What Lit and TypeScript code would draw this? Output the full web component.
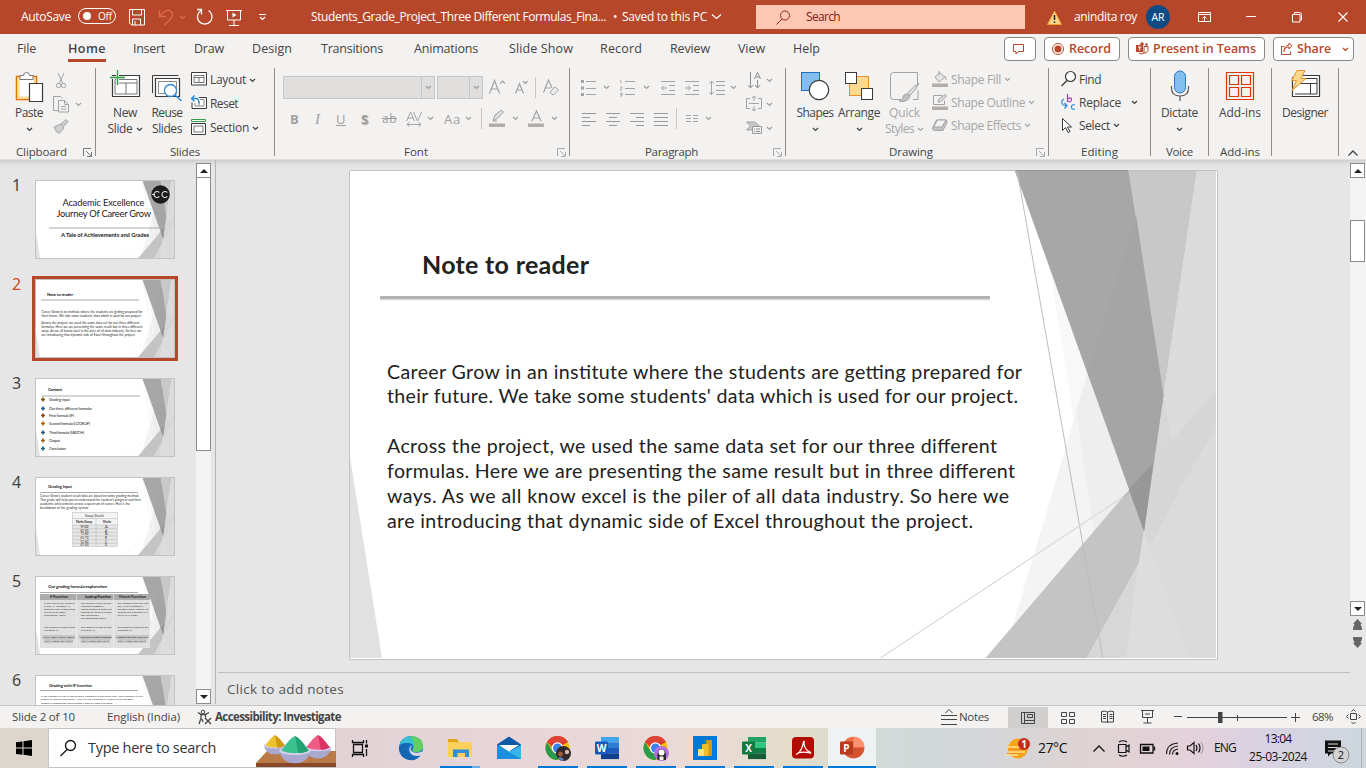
import { LitElement, html, svg, css } from "lit";
import { customElement } from "lit/decorators.js";

/* Label whose tracking is tuned so that it occupies w pixels. */
const t = (text: string, w: number, cls = "") =>
  html`<span class="t ${cls}" data-w=${w}>${text}</span>`;

/* Inline icon; the drawing uses window coordinates starting at (x, y). */
const ic = (x: number, y: number, w: number, h: number, body: unknown, cls = "") =>
  html`<svg class="ic ${cls}" width=${w} height=${h} viewBox="${x} ${y} ${w} ${h}">${body}</svg>`;

const chev = (cls = "") => ic(0, 0, 7, 5, svg`<path d="M1 1l2.5 2.4L6 1" fill="none" stroke="currentColor" stroke-width="1.3"/>`, cls);

const launcher = (cls = "") =>
  ic(0, 0, 9, 9, svg`<path d="M.5 8V.5H8M3 3l5 5M8.5 4v4.5H4" fill="none" stroke="currentColor"/>`, "launch " + cls);

/* Facet background shared by the main slide and the thumbnails. */
const facets = svg`
  <rect x="350" y="170" width="868" height="489" fill="#fff"/>
  <path d="M350 457L382 658H350z" fill="#e1e1e1"/>
  <path d="M1034 170L1112 658H1216V170z" fill="#f8f8f8"/>
  <path d="M1136 215L1088 372 1065 450 1003 658H1216V215z" fill="#f4f4f4"/>
  <path d="M1088 372L1076 411 1113 658H1216V372z" fill="#eeeeee"/>
  <path d="M1197 170H1216V658H1126L1144 531 1163.5 395z" fill="#dbdbdb"/>
  <path d="M1163.5 395L1179.5 490 1150 545 1144 531z" fill="#d5d5d5"/>
  <path d="M1153 463L1216 390V427L1179 490 1150 545 1144 531z" fill="#d6d6d6"/>
  <path d="M1163.5 395L1171 440 1153 463z" fill="#d7d7d7"/>
  <path d="M985.5 658L1129 490 1153 463 1144 531 1139 563 1087 658z" fill="#c4c4c4"/>
  <path d="M1087 658L1139 563 1126 658z" fill="#d7d7d7"/>
  <path d="M1139 563L1144 531 1189 658H1126z" fill="#dddddd"/>
  <path d="M1128.5 170H1197L1163.5 395z" fill="#c8c8c8"/>
  <path d="M1014.5 170H1128.5L1163.5 395 1144 531z" fill="#a7a7a7"/>
  <path d="M1136 215L1163.5 395 1144 531 1088 372z" fill="#a5a5a5"/>
  <path d="M1129 490L1153 463 1144 531z" fill="#979797"/>
  <path d="M1017 170L1103 659" stroke="#bdbdbd" fill="none"/>
  <path d="M879 659L1123 497" stroke="#dadada" fill="none" stroke-width="1.2"/>
  <path d="M1123 497L1150 478" stroke="#9d9d9d" stroke-width=".6"/>`;

const st = (x: number, y: number, s: number, len: number, text: string, cls = "") =>
  svg`<text class="st ${cls}" x=${x} y=${y} font-size=${s} textLength=${len}>${text}</text>`;

const slide = (w: number, h: number, body: unknown) => html`<svg class="thumb" width=${w} height=${h} viewBox="0 0 ${w} ${h}">
  <svg x="0" y="0" width=${w} height=${h} viewBox="350 170 868 489" preserveAspectRatio="none">${facets}</svg>
  ${body}<rect x=".5" y=".5" width=${w - 1} height=${h - 1} fill="none" stroke="#c3c3c3"/></svg>`;

const rule = (x: number, y: number, w: number) => svg`<path d="M${x} ${y}h${w}" stroke="#aaa"/>`;

const thumbs = [
  svg`${st(27.5, 26, 9.3, 82, "Academic Excellence")}${st(21.5, 37, 9.3, 94.5, "Journey Of Career Grow")}
    ${rule(14, 48, 110)}${st(26, 57, 5.8, 88, "A Tale of Achievements and Grades", "sb")}
    <circle cx="125.5" cy="14.5" r="9.3" fill="#1d1d1f"/><g fill="none" stroke="#ddd" stroke-width="1.1"><path d="M124.3 12.600a3 3 0 1 0 0 3.800M132.300 12.600a3 3 0 1 0 0 3.800M117 14.500h3"/></g>`,
  svg`${st(12, 17, 4.3, 26, "Note to reader", "sb")}${rule(6, 21, 98)}
    ${st(6.5, 34.2, 3.2, 101, "Career Grow in an institute where the students are getting prepared for")}
    ${st(6.5, 38, 3.2, 100, "their future. We take some students' data which is used for our project.")}
    ${st(6.5, 45.4, 3.2, 98, "Across the project, we used the same data set for our three different")}
    ${st(6.5, 49.2, 3.2, 101, "formulas. Here we are presenting the same result but in three different")}
    ${st(6.5, 53, 3.2, 100, "ways. As we all know excel is the piler of all data industry. So here we")}
    ${st(6.5, 56.8, 3.2, 94, "are introducing that dynamic side of Excel throughout the project.")}`,
  svg`${st(13, 13.2, 4.3, 14, "Content", "sb")}${rule(7, 18, 98)}
    ${[
      ["Grading input", 22, 21], ["Our three different formulas", 31, 43], ["First formula (IF)", 38, 25], ["Second formula (LOOKUP)", 46, 41],
      ["Third formula (MATCH)", 55, 35], ["Output", 63, 11], ["Conclusion", 71, 17],
    ].map(([s, y, w], i) => svg`<path d="M8 ${(y as number) - 2.5}v4M6 ${(y as number) - 0.5}h4" stroke=${["#7a5a10", "#2d5f8c", "#8c4020", "#b06a10", "#2f5b7a", "#a06a10", "#1f6c80"][i]} stroke-width="1.700"/>${st(14, (y as number) + 1, 3.9, w as number, s as string)}`)}`,
  svg`${st(13, 11, 4.2, 24, "Grading Input", "sb")}${rule(5, 15.5, 98)}
    ${st(5, 20.3, 3.1, 99, "Career Grow's student result data are based on some grading method.")}
    ${st(5, 24.3, 3.1, 101, "This grade will help you to understand the student's progress and their")}
    ${st(5, 28.3, 3.1, 90, "academic achievements across a spectrum of scores. Here's the")}
    ${st(5, 32.3, 3.1, 49, "breakdown of the grading system.")}
    <rect x="37.500" y="35.500" width="45" height="34" fill="#e6e6e6" stroke="#ccc" stroke-width=".7"/>
    <rect x="38" y="36" width="44" height="12" fill="#f4f4f4"/>
    <path d="M37.500 41.500h45M37.500 48h45M61 41.500v28M38 51.700h44M38 55.300h44M38 59h44M38 62.700h44M38 66.300h44" stroke="#bbb" stroke-width=".6"/>
    ${st(50, 40.3, 2.8, 19, "Group Details")}${st(41, 45.7, 2.8, 16, "Marks Group", "sb")}${st(68, 45.7, 2.8, 8, "Marks", "sb")}
    ${[["91-100", "A+"], ["81-90", "A"], ["71-80", "B+"], ["61-70", "B"], ["51-60", "C"], ["41-50", "D"]].map(([a, b], i) =>
      svg`${st(45.5, 51.2 + i * 3.6, 2.9, 8, a)}${st(70, 51.2 + i * 3.6, 2.9, 3.5, b)}`)}`,
  svg`${st(13, 12, 4.5, 59, "Our grading formula explanation", "sb")}${rule(5, 16.5, 98)}
    <rect x="5" y="18" width="110" height="54" fill="#e0e0e0"/><rect x="5" y="18" width="110" height="6" fill="#ababab"/>
    <path d="M41.500 18v54M78.500 18v54" stroke="#eee" stroke-width=".6"/>
    ${[["If Function", 15], ["Look-up Function", 50], ["Match Function", 84]].map(([s, x], i) => st(x as number, 21.9, 4, [18, 26, 27][i], s as string, "sb"))}
    ${["If the use of our formula|is the IF function, a|powerful tool in Excel that|allows us to apply|conditional logic.||||The formula is used for the|function is:", "Our formula relies on the|VLOOKUP function, a|robust feature in Excel for|looking up values in a table|and returning a|corresponding result.|||The formula is used for the|function is:", "Our formula kicks off with|the MATCH function, a|versatile Excel feature for|finding the position of a|value in a range.||||The formula is used for the|function is:"].map((c, i) =>
      c.split("|").map((s, j) => s ? st(9 + i * 36.7, 27.5 + j * 3.05, 2.5, Math.min(31, s.length * 1.22), s) : ""))}
    ${["=IF(H2>=90%,\"A+\",IF(H2>=80%,\"A\",", "=VLOOKUP(H2,$L$2:$N$10,3,TRUE)", "=INDEX($M$2:$M$10,MATCH(H2,1))"].map((s, i) =>
      svg`<path d="M${7 + i * 36.7} 59h33v4h-33zM${9 + i * 36.7} 63h29v4h-29z" fill="#c6c6c6"/>${st(7.5 + i * 36.7, 62, 2.5, 32, s)}${st(9.5 + i * 36.7, 66, 2.5, 28, "H2>=70%,\"B\",\"C\"))")}`)}`,
  svg`${st(14, 12, 4.3, 43, "Grading with IF function", "sb")}${rule(5, 15.500, 98)}
    ${st(6, 22.2, 2.6, 102, "If the function is one of the primary functions in the Excel tool. This function is very")}
    ${st(6, 25.4, 2.6, 92, "simple to explain and useful. Here we are using the IF formula with multiple")}
    ${st(6, 28.6, 2.6, 72, "nested IF statements and creating a step-by-step evolution.")}`,
];

const big = (icon: unknown, a: [string, number], b?: [string, number] | null, drop = false, cls = "") => html`<div class="big ${cls}">${icon}
  <div class="bl">${t(a[0], a[1])}</div><div class="bl">${b ? t(b[0], b[1]) : ""}${drop ? chev() : ""}</div></div>`;

const chromeLogo = (cx: number, badge: unknown) => ic(cx - 13, 734, 26, 28, svg`<g transform="translate(${cx - 13} 734)">
  <circle cx="12.500" cy="14" r="12" fill="#fbbc04"/><path d="M12.500 14L2.100 8A12 12 0 0 1 22.900 8z" fill="#d93a2f"/><path d="M2.100 8A12 12 0 0 0 12.500 26L18 16.500 12.500 14 7.500 17z" fill="#2a9a4b"/>
  <path d="M2.100 8A12 12 0 0 1 22.900 8H12.500L8 14z" fill="#dd4234"/><circle cx="12.500" cy="14" r="5.800" fill="#fff"/><circle cx="12.500" cy="14" r="4.500" fill="#3d82ea"/>${badge}</g>`);

const officeLogo = (x: number, letter: string, dark: string, cols: string[]) => ic(x, 736, 25, 24, svg`
  ${cols.map((c, i) => svg`<rect x=${x + 6} y=${737 + i * 5.5} width="18" height="5.600" fill=${c}/>`)}
  <rect x=${x} y="741.500" width="13" height="13" rx="1" fill=${dark}/><text x=${x + 6.5} y="751.700" class="logo">${letter}</text>`);

const app = (icon: unknown, cls = "run") => html`<div class="app ${cls}">${icon}</div>`;

@customElement("app-root")
class AppRoot extends LitElement {
  static styles = css`
    :host { display: block; width: 1366px; height: 768px; overflow: hidden; font: 12px/16px "Open Sans", "Noto Sans", sans-serif; color: #444; background: #e6e6e6; }
    * { box-sizing: border-box; }
    .t { white-space: pre; display: inline-block; flex: none; }
    .ic, .thumb { display: block; flex: none; overflow: visible; }
    .w { height: 768px; display: grid; grid-template-rows: 34px 34px 92px 546px 22px 40px; }
    .title { background: #b7472a; color: #fff; display: grid; align-items: center; justify-items: start; padding-left: 21px;
      grid-template-columns: 57px 51px 30px 20px 17px 30px 32px 53px 302px 9px 89px 45px 291px 27px 72px 52px 48px 46px 46px 28px; }
    .toggle { width: 38px; height: 16px; border: 1px solid #fff; border-radius: 8px; display: flex; align-items: center; gap: 7px; padding-left: 4px; font-size: 10px; line-height: 13px; margin-top: -2px; }
    .knob { width: 8px; height: 8px; border-radius: 50%; background: #fff; }
    .find { width: 269px; height: 24px; background: #fdc7b4; color: #7b1c19; display: flex; align-items: center; gap: 16px; padding-left: 20px; }
    .dim { color: #e2694b; }
    .avatar { width: 24px; height: 24px; border-radius: 50%; background: #0f4c85; font-size: 10.5px; display: flex; align-items: center; justify-content: center; }
    .tabs { background: #f3f2f1; font-size: 12.500px; display: grid; align-items: start; justify-items: start; padding-left: 17px;
      grid-template-columns: 51px 65px 61px 58px 69px 93px 95px 91px 70px 68px 55px 211px 40px 84px 145px 81px; }
    .tab { height: 28px; padding-top: 7px; display: flex; line-height: 16px; }
    .on { border-bottom: 3px solid #b7472a; font-weight: 600; color: #444; }
    .btn { height: 24px; margin-top: 3px; border: 1px solid #8a8886; border-radius: 4px; background: #fff; color: #b7472a; font-weight: 600; display: flex; align-items: center; gap: 5px; padding: 0 7px; }
    .b0 { width: 32px; padding-left: 8px; } .b1 { width: 76px; } .b2 { width: 137px; } .b3 { width: 81px; } .b3 .t { margin-right: 6px; }
    .ribbon { background: #f3f2f1; border-bottom: 1px solid #e1dfdd; display: grid; grid-template-columns: 96px 179px 295px 216px 263px 102px 58px 63px 67px 27px; }
    .g { height: 88px; border-right: 1px solid #8f8d8b; display: grid; grid-template-rows: 76px 12px; }
    .body { display: flex; }
    .foot { display: flex; font-size: 11.500px; line-height: 16px; color: #444; }
    .name { flex: 1; display: flex; justify-content: center; }
    .launch { margin: 4px 3px 0 0; color: #777; } .off { color: #aaa; }
    .big { display: flex; flex-direction: column; align-items: center; }
    .big > .ic { margin-bottom: 1px; }
    .bl { height: 16px; display: flex; align-items: center; gap: 3px; }
    .gray { color: #a6a6a6; }
    .c0 { width: 53px; padding-left: 5px; } .c1 { width: 51px; padding-left: 7px; } .c2 { width: 44px; padding-right: 4px; }
    .d0 { width: 50px; padding-left: 8px; } .d1 { width: 46px; } .d2 { width: 50px; padding-right: 5px; } .full { flex: 1; }
    .list { display: grid; grid-template-rows: 24px 24px 24px; align-content: start; }
    .even { grid-template-rows: 23px 23px 23px; }
    .li { display: flex; align-items: center; gap: 3px; }
    .clip { grid-template-columns: 22px 15px; align-items: center; justify-items: start; }
    .edit { padding-left: 12px; } .wide { gap: 10px; } .li .pair { display: flex; gap: 3px; align-items: center; }
    .fontg { padding: 8px 0 0 8px; display: grid; grid-template-rows: 23px 23px; row-gap: 8px; color: #a0a0a0; }
    .f1 { display: grid; align-items: center; justify-items: start; grid-template-columns: 154px 52px 26px 20px 8px 18px; }
    .f2 { display: grid; align-items: center; justify-items: start; padding-left: 7px; grid-template-columns: 25px 21px 25px 21px 24px 21px 17px 21px 16px 8px 23px 16px 23px 8px; font-size: 13px; }
    .combo { height: 23px; width: 152px; border: 1px solid #c6c6c6; background: #e1dfdd; display: flex; align-items: center; justify-content: flex-end; }
    .combo .cc { height: 21px; width: 13px; border-left: 1px solid #c6c6c6; display: flex; align-items: center; justify-content: center; }
    .small { width: 46px; } .div { width: 1px; height: 21px; background: #c8c6c4; }
    .b { font-weight: 700; } .i { font-style: italic; font-family: "Liberation Serif", serif; font-size: 15px; } .u { text-decoration: underline; } .s { text-decoration: line-through; font-size: 12px; } .sh { text-shadow: 1px 1px 1px #aaa; }
    .parag { display: grid; grid-template-columns: 176px 30px; color: #a0a0a0; }
    .pl { display: grid; grid-template-rows: 23px 23px; row-gap: 8px; padding: 8px 0 0 11px; }
    .p1 { display: grid; align-items: center; justify-items: start; grid-template-columns: 22px 16px 24px 18px 24px 24px 21px 8px; }
    .p2 { display: grid; align-items: center; justify-items: start; padding-left: 1px; grid-template-columns: 24px 24px 24px 22px 10px 19px 8px; }
    .collapse { padding: 82px 0 0 9px; color: #444; }
    .work { display: grid; grid-template-columns: 196px 15px 5px 1134px 16px; background: linear-gradient(#cfcfcf, #e6e6e6 6px) no-repeat; background-size: 100% 6px; border-bottom: 1px solid #c6c4c2; overflow: hidden; }
    .panel { padding: 20px 0 0 12px; overflow: hidden; height: 545px; }
    .item { display: grid; grid-template-columns: 23px 140px; height: 99px; font-size: 16px; line-height: 20px; }
    .num { margin-top: -5px; } .item .num { font-family: "Noto Sans", sans-serif; }
    .sel { color: #d24726; } .sel .thumb { outline: 3px solid #b7472a; }
    .st { font-family: Lato, "Noto Sans", sans-serif; fill: #222; } .sb { font-weight: 700; }
    .bar { margin-top: 3px; height: 541px; background: #f3f3f3; display: flex; flex-direction: column; }
    .sq { width: 15px; height: 15px; border: 1px solid #8c8c8c; background: #fff; display: flex; align-items: center; justify-content: center; }
    .track { flex: 1; } .hold { width: 15px; background: #fff; border: 1px solid #8c8c8c; } .h1 { height: 274px; margin-top: -1px; } .h2 { height: 42px; margin-top: 42px; }
    .split { border-right: 1px solid #b4b4b4; height: 544px; margin-right: 0; }
    .stage { display: grid; grid-template-rows: 512px 1fr; }
    .canvas { padding: 10px 0 0 133px; }
    .notes { border-top: 1px solid #c0c0c0; margin-left: 2px; padding: 7px 0 0 9px; font-size: 13.500px; line-height: 18px; color: #555; }
    .rbar { height: 453px; } .right { color: #666; } .jump { margin: 3px 0 0 3px; }
    .status { background: #f3f2f1; display: grid; align-items: center; justify-items: start; padding-left: 12px; font-size: 11.500px; color: #444;
      grid-template-columns: 95px 90px 18px 726px 18px 49px 40px 13px 40px 40px 33px 13px 104px 21px 34px 16px; }
    .active { width: 40px; height: 21px; background: #d0cfce; display: flex; align-items: center; justify-content: center; }
    .task { background: linear-gradient(90deg, #dcd6cd 0, #ddd5cf 12%, #e2d3d6 27%, #e8d5d9 38%, #eadbd6 52%, #e3ddc9 58%, #d0dad8 65%, #d5d5d7 73%, #dfd3d3 80%, #e4d1da 87%, #d8d2e2 93%, #cdd7dd); color: #111; display: grid;
      grid-template-columns: 48px 288px 51px 441px 178px 32px 55px 25px 22px 26px 21px 27px 35px 76px 1fr; align-items: center; justify-items: start; }
    .start { justify-self: center; }
    .box { width: 288px; height: 40px; background: #fff; border: 1px solid #c4c2c4; display: flex; align-items: center; padding-left: 11px; gap: 12px; font-size: 14.500px; color: #333; }
    .bowls { margin-left: auto; margin-right: -1px; }
    .view { margin-left: 16px; }
    .apps { display: flex; gap: 1px; } .app { width: 48px; height: 40px; display: flex; align-items: center; justify-content: center; position: relative; }
    .run::after { content: ""; position: absolute; left: 4px; right: 4px; bottom: 0; height: 2px; background: #0078d7; }
    .ex::after { right: 12px; box-shadow: 8px 0 #6aaee8; } .cur { background: #eef2f3; } .cur::after { left: 0; right: 0; }
    .wx { font-size: 14px; } .clock { display: flex; flex-direction: column; align-items: center; line-height: 18px; width: 58px; }
    .logo { font: 700 10px "Open Sans", sans-serif; fill: #fff; text-anchor: middle; }
  `;

  updated() {
    this.renderRoot.querySelectorAll<HTMLElement>("[data-w]").forEach((el) => {
      el.style.letterSpacing = "0";
      const n = el.getBoundingClientRect().width;
      el.style.letterSpacing = `${(Number(el.dataset.w) - n) / (el.textContent || " ").length}px`;
    });
  }

  titleBar() {
    return html`<header class="title">
      ${t("AutoSave", 50)}
      <div class="toggle"><span class="knob"></span>${t("Off", 14)}</div>
      ${ic(129, 9, 16, 17, svg`<path d="M129.500 9.500h15v15.500h-13l-2-2zM132.500 9.500v5.500h9v-5.500M132.500 25v-6h8v6M135 21v4" fill="none" stroke="#fff"/>`)}
      ${ic(159, 9, 15, 17, svg`<path d="M159.500 10v6.500h6.500M160 16l4-4c6-4.500 12 2 6.500 7l-6 6" fill="none" stroke="#e2694b" stroke-width="1.300"/>`)}
      ${chev("dim")}
      ${ic(196, 9, 17, 18, svg`<path d="M201 11.500a7.300 7.300 0 1 0 7.500 0M197 10.500h4.500v5" fill="none" stroke="#fff" stroke-width="1.300"/>`)}
      ${ic(226, 9, 16, 17, svg`<path d="M226 10.500h16M227.500 10.500v9.500h13v-9.500M234 20v5M229 25.500h10" fill="none" stroke="#fff"/><path d="M232.500 12.500l4 2.500-4 2.500z" fill="#fff"/>`)}
      ${ic(258, 13, 9, 8, svg`<path d="M259 14.500h7M260 17l2.500 2.500 2.500-2.500" fill="none" stroke="#fff" stroke-width="1.200"/>`)}
      ${t("Students_Grade_Project_Three Different Formulas_Fina...", 295)}
      ${t("•", 5)}
      ${t("Saved to this PC", 85)}
      ${ic(711, 13, 11, 8, svg`<path d="M712 14.500l4.500 4 4.500-4" fill="none" stroke="#fff" stroke-width="1.200"/>`)}
      <div class="find">${ic(776, 9, 14, 15, svg`<circle cx="785" cy="14.500" r="4.500" fill="none" stroke="#8b2a23"/><path d="M782 18l-5.500 5.500" stroke="#8b2a23"/>`)}${t("Search", 34)}</div>
      ${ic(1047, 9, 15, 15, svg`<path d="M1054.500 10l7 13.500h-14z" fill="#fbd58a" stroke="#f0a030"/><path d="M1054.500 14v5M1054.500 20.500v1.500" stroke="#222" stroke-width="1.500"/>`)}
      ${t("anindita roy", 63)}
      <div class="avatar">${t("AR", 13)}</div>
      ${ic(1198, 10, 13, 12, svg`<path d="M1198.500 11.500h12v9h-12zM1198.500 13.500h12M1204.500 20v-4.500M1202.500 17.500l2-2 2 2" fill="none" stroke="#fff"/>`)}
      ${ic(1246, 10, 10, 12, svg`<path d="M1246 15.500h10" stroke="#fff"/>`)}
      ${ic(1292, 11, 10, 11, svg`<path d="M1292.500 13.500h7.500v7.500h-7.500zM1294.500 13v-1.500h5q2 0 2 2v5.500h-1.500" fill="none" stroke="#fff"/>`)}
      ${ic(1338, 11, 10, 10, svg`<path d="M1338.500 11.500l9 9M1347.500 11.500l-9 9" stroke="#fff" stroke-width="1.100"/>`)}
    </header>`;
  }

  tabRow() {
    const tabs: [string, number][] = [["File", 19], ["Home", 38], ["Insert", 32], ["Draw", 30], ["Design", 40], ["Transitions", 62], ["Animations", 64], ["Slide Show", 64], ["Record", 42], ["Review", 40], ["View", 27], ["Help", 27]];
    return html`<nav class="tabs">
      ${tabs.map(([s, w]) => html`<div class="tab ${s === "Home" ? "on" : ""}">${t(s, w)}</div>`)}
      <div class="btn b0">${ic(1013, 43, 11, 11, svg`<path d="M1013.500 43.500h10v7h-5l-2.500 2.500v-2.500h-2.500z" fill="none" stroke="#b7472a"/>`)}</div>
      <div class="btn b1">${ic(1052, 43, 12, 12, svg`<circle cx="1058" cy="49" r="5.500" fill="none" stroke="#b7472a"/><circle cx="1058" cy="49" r="3.500" fill="#b7472a"/>`)}${t("Record", 42)}</div>
      <div class="btn b2">${ic(1136, 43, 12, 12, svg`<rect x="1136" y="45" width="7" height="7" fill="#b7472a"/><path d="M1138 47h3.500M1139.700 47v3.500" stroke="#fff"/><circle cx="1142" cy="44" r="1.800" fill="#b7472a"/><circle cx="1146.500" cy="44.500" r="1.300" fill="#b7472a"/><path d="M1144 46.500h4v4q-1 3-4 2.500zM1139 53q3 2 5 0" fill="none" stroke="#b7472a"/>`)}${t("Present in Teams", 103)}</div>
      <div class="btn b3">${ic(1281, 43, 11, 12, svg`<path d="M1284 46.500h-2.500v8h9v-3M1284 51.500q.5-4.500 5-4.500v2l3-3.300-3-2.700v2q-5 .5-5 6.500z" fill="none" stroke="#b7472a"/>`)}${t("Share", 34)}${chev()}</div>
    </nav>`;
  }

  group(name: string, w: number, body: unknown, launch?: string) {
    return html`<section class="g"><div class="body">${body}</div><div class="foot"><div class="name">${name ? t(name, w) : ""}</div>${launch !== undefined ? launcher(launch) : ""}</div></section>`;
  }

  ribbon() {
    const k = "#3b3a39", lg = "#a3a3a3";
    const align = (x: number, a: number[][]) => ic(x, 111, 15, 14, svg`<path d=${a.map(([s, w], i) => `M${x + s} ${112.5 + i * 4}h${w}`).join("")} stroke="#9a9a9a"/>`);
    return html`<div class="ribbon">
      ${this.group("Clipboard", 51, html`
        ${big(ic(17, 68, 29, 36, svg`<path d="M18.500 76.500h20v23h-20z" fill="#fff" stroke="#e07000" stroke-width="1.500"/><path d="M20.500 78.500h16v19h-16z" fill="none" stroke="#f8da90" stroke-width="2"/><path d="M22 79.500v-4h3.500q0-3 3-3t3 3H35v4z" fill="#fff" stroke="#777"/><path d="M31.500 83.500h13v18h-13z" fill="#fff" stroke=${k} stroke-width="1.200"/>`), ["Paste", 28], null, true, "c0")}
        <div class="list clip gray">
          ${ic(53, 71, 16, 17, svg`<g fill="none" stroke=${lg}><path d="M58 72l5 11M64 72l-5 11"/><circle cx="58.500" cy="84.500" r="2.200"/><circle cx="63.500" cy="84.500" r="2.200"/></g>`)}<i></i>
          ${ic(53, 95, 16, 17, svg`<g fill="#f3f2f1" stroke=${lg}><path d="M60 109.500h-6.500v-14h7l2 2"/><path d="M58.500 99.500h6l4 4v7.500h-10zM64.500 99.500v4h4M61 105.500h5M61 108h5" /></g>`)}${chev()}
          ${ic(53, 120, 16, 16, svg`<path d="M54 127l7-3 3 4-5 5.500q-3-1-5-6.500zM61 124l5-4.500 2 2-4.500 5" fill="#d0d0d0" stroke=${lg}/>`)}
        </div>`, "")}
      ${this.group("Slides", 30, html`
        ${big(ic(109, 68, 30, 36, svg`<path d="M111.500 75.500h27v21h-27z" fill="#fff" stroke=${k} stroke-width="1.200"/><path d="M114 79.500h22v14.500h-22zM114 83h22M125 83v11" fill="none" stroke="#777"/><path d="M116.500 70v15M109 77.500h15" stroke="#f3f2f1" stroke-width="3"/><path d="M116.500 70v15M109 77.500h15" stroke="#2ea04a" stroke-width="1.300"/>`), ["New", 24], ["Slide", 25], true, "c1")}
        ${big(ic(152, 68, 32, 36, svg`<path d="M153.500 93v-17.500h26" fill="none" stroke=${k}/><path d="M156.500 78.500h24v18h-24z" fill="#fff" stroke=${k} stroke-width="1.200"/><path d="M159.500 81.500h18v12h-18z" fill="none" stroke="#888"/><circle cx="171.500" cy="90.500" r="6" fill="#fff" stroke="#2b88d8" stroke-width="1.300"/><path d="M176 95l6.500 6" stroke="#2b88d8" stroke-width="1.500"/>`), ["Reuse", 31], ["Slides", 30], false, "c2")}
        <div class="list">
          <div class="li">${ic(191, 73, 16, 14, svg`<path d="M191.500 72.500h15v12.500h-15z" fill="#fff" stroke=${k}/><path d="M194 75.500h10v7h-10zM194 77.500h10M199 77.500v5" fill="none" stroke="#777"/>`)}${t("Layout", 36)}${chev()}</div>
          <div class="li">${ic(191, 97, 16, 14, svg`<path d="M199 97.500h7.500v11h-14.500v-6" fill="#fff" stroke=${k}/><path d="M200 99.500h4v6.500h-9v-3M199 101v5" fill="none" stroke="#888"/><path d="M192 98.500h4q3 0 3 5M194.500 95.500l-3 3 3 3" fill="none" stroke="#2b88d8" stroke-width="1.300"/>`)}${t("Reset", 28)}</div>
          <div class="li">${ic(191, 120, 16, 16, svg`<path d="M191.500 119.500h14v2h-14z" fill="#fff" stroke="#2ea04a"/><path d="M191.500 123.500h14v11h-14z" fill="#fff" stroke=${k}/><path d="M194 126h9v6h-9z" fill="none" stroke="#777"/>`)}${t("Section", 39)}${chev()}</div>
        </div>`)}
      ${this.group("Font", 24, html`<div class="fontg">
        <div class="f1">
          <div class="combo"><span class="cc">${chev()}</span></div><div class="combo small"><span class="cc">${chev()}</span></div>
          ${ic(489, 79, 16, 16, svg`<path d="M489.500 92.500l5-13 5 13M491.500 88h6M500 82.500l2.500-2.500 2.500 2.500" fill="none" stroke=${lg} stroke-width="1.200"/>`)}
          ${ic(514, 79, 15, 16, svg`<path d="M514.500 92.500l4-10 4 10M516 89h5M522 80l2.300 2.500 2.200-2.500" fill="none" stroke=${lg} stroke-width="1.200"/>`)}
          <span class="div"></span>
          ${ic(543, 79, 16, 17, svg`<path d="M543.500 92.500l5-12.500 3.500 8M545.500 88h5" fill="none" stroke=${lg} stroke-width="1.200"/><path d="M550 92l5-5 3.500 3-4.500 4.500h-2z" fill="#eee" stroke=${lg}/>`)}
        </div>
        <div class="f2">
          ${t("B", 8, "b")}${t("I", 6, "i")}${t("U", 10, "u")}${t("S", 8, "sh b")}${t("ab", 15, "s")}
          ${ic(406, 110, 17, 17, svg`<path d="M406.500 121l4-9 4 9M408 118h5M413.500 112l4 9 4-9M407 124.500h14M409.500 122l-2.500 2.500 2.500 2M418.500 122l2.500 2.500-2.500 2" fill="none" stroke=${lg}/>`)}${chev()}
          ${t("Aa", 17)}${chev()}<span class="div"></span>
          ${ic(489, 110, 16, 17, svg`<path d="M493 121l2-6 6.500-5 2 2-6 6.500zM493 121h4" fill="#ddd" stroke=${lg}/><rect x="489" y="123.500" width="16" height="3.500" fill="#b0adab"/>`)}${chev()}
          ${ic(528, 110, 16, 17, svg`<path d="M532 121l4.500-10 4.500 10M533.500 118h6" fill="none" stroke=${lg} stroke-width="1.200"/><rect x="528" y="123.500" width="16" height="3.500" fill="#b0adab"/>`)}${chev()}
        </div></div>`, "off")}
      ${this.group("Paragraph", 53, html`<div class="parag">
        <div class="pl"><div class="p1">
          ${ic(581, 79, 16, 16, svg`<path d="M581 80.500h3M581 87h3M581 93.500h3" stroke=${lg} stroke-width="3"/><path d="M586 80.500h10M586 87.500h10M586 93.500h10" stroke=${lg}/>`)}${chev()}
          ${ic(619, 79, 16, 16, svg`<path d="M620 80l1-.5v3M620 86h2v1l-2 2h2M620 92h2v3h-2M620 93.500h2" stroke=${lg} stroke-width=".8" fill="none"/><path d="M625 80.500h10M625 87.500h10M625 93.500h10" stroke=${lg}/>`)}${chev()}
          ${ic(661, 79, 15, 16, svg`<path d="M661 80.500h14M669 84.500h6M669 89.500h6M661 93.500h14M667 87h-5.500M664 84.500l-2.500 2.500 2.500 2.500" fill="none" stroke=${lg}/>`)}
          ${ic(685, 79, 15, 16, svg`<path d="M685 80.500h14M693 84.500h6M693 89.500h6M685 93.500h14M685 87h5.500M688 84.500l2.500 2.500-2.500 2.500" fill="none" stroke=${lg}/>`)}
          ${ic(709, 79, 16, 16, svg`<path d="M716 80.500h9M716 84.500h9M716 89.500h9M716 93.500h9M711.500 80v13.500M709 82.500l2.500-2.500 2.500 2.500M709 91l2.500 2.500 2.500-2.500" fill="none" stroke=${lg}/>`)}${chev()}
        </div><div class="p2">
          ${align(582, [[0, 14], [0, 8], [0, 14], [0, 8]])}${align(606, [[0, 14], [3, 8], [0, 14], [3, 8]])}${align(630, [[0, 14], [6, 8], [0, 14], [6, 8]])}${align(654, [[0, 14], [0, 14], [0, 14], [0, 14]])}
          <span class="div"></span>${ic(686, 112, 13, 13, svg`<path d="M686 115.500h5M693 115.500h5M686 118.500h5M693 118.500h5M686 121.500h5M693 121.500h5" stroke=${lg}/>`)}${chev()}
        </div></div>
        <div class="list">
          <div class="li">${ic(745, 71, 17, 17, svg`<path d="M749.500 71v15.500M747 84l2.500 3 2.500-3M756.500 79v7.500M754 84l2.500 3 2.500-3M753.500 78l3-6.500 3 6.500M754.500 76h4" fill="none" stroke="#8d8d8d"/>`)}${chev()}</div>
          <div class="li">${ic(745, 95, 17, 17, svg`<path d="M749 97.500h-3.500v10h3.500M757 97.500h3.500v10h-3.500M748 102.500h10M753 95v5M753 105v5M751 97l2-2 2 2M751 108l2 2 2-2" fill="none" stroke=${lg}/>`)}${chev()}</div>
          <div class="li">${ic(745, 119, 17, 16, svg`<path d="M745.500 121h8l5 4-5 4h-8l4-4z" fill="#c8c8c8" stroke=${lg}/><path d="M751.500 125.500h9v7h-9z" fill="#f3f2f1" stroke="#999"/><path d="M753 128h1M755 128h4M753 130.500h1M755 130.500h4" stroke="#888"/>`)}${chev()}</div>
        </div></div>`, "off")}
      ${this.group("Drawing", 44, html`
        ${big(ic(800, 68, 30, 36, svg`<rect x="801.500" y="72.500" width="18" height="18" fill="#83beec" stroke="#1e6fbf"/><circle cx="819" cy="90" r="9.700" fill="#fff" stroke=${k} stroke-width="1.200"/>`), ["Shapes", 37], null, true, "d0")}
        ${big(ic(845, 68, 29, 36, svg`<rect x="849.500" y="76.500" width="19" height="19" fill="#f8da90" stroke="#e8912d"/><rect x="845.500" y="72.500" width="11" height="11" fill="#fff" stroke=${k}/><rect x="861.500" y="88.500" width="11" height="11" fill="#fff" stroke=${k}/>`), ["Arrange", 42], null, true, "d1")}
        ${big(ic(891, 68, 31, 36, svg`<path d="M903 99.500h-7.500q-3 0-3-3v-21q0-3 3-3h24v12M920 90v9.500h-5" fill="none" stroke=${lg}/><path d="M921 83q-5 3-11.500 10l2.500 2.500q7-7 9-12.500z" fill="#e0e0e0" stroke=${lg}/><path d="M909 94q-4 0-4.500 5-1.500 2-3.500 2 9 2 11-5z" fill="#c0c0c0" stroke=${lg}/>`), ["Quick", 31], ["Styles", 29], true, "d2 gray")}
        <div class="list even gray">
          <div class="li">${ic(932, 70, 16, 17, svg`<path d="M935 76l5-4.500 4.500 5-5.500 4.500zM939 70v4M944 75q3 1 2 4" fill="#e6e6e6" stroke=${lg}/><rect x="932" y="82.500" width="16" height="3.500" fill="#b0adab"/>`)}${t("Shape Fill", 50)}${chev()}</div>
          <div class="li">${ic(932, 93, 16, 17, svg`<path d="M942 94.500h-8.500v9h11v-4" fill="none" stroke=${lg}/><path d="M938 101l1-3 6-4.500 1.500 1.500-5.500 5.500z" fill="#ddd" stroke=${lg}/><rect x="932" y="105.500" width="16" height="3.500" fill="#b0adab"/>`)}${t("Shape Outline", 74)}${chev()}</div>
          <div class="li">${ic(932, 116, 16, 17, svg`<path d="M932.500 127l4-8h9q2 0 1.500 2.500l-4 8h-8.500q-2 0-2-2.500z" fill="#c4c4c4" stroke=${lg}/><path d="M933.500 126l4-7h8.500l-4 7z" fill="#f3f2f1" stroke=${lg}/>`)}${t("Shape Effects", 70)}${chev()}</div>
        </div>`, "off")}
      ${this.group("Editing", 37, html`<div class="list even edit">
          <div class="li">${ic(1061, 70, 15, 17, svg`<circle cx="1070.500" cy="75.500" r="5" fill="#fff" stroke=${k} stroke-width="1.200"/><path d="M1067 79.500l-5.500 5.500" stroke=${k} stroke-width="1.300"/>`)}${t("Find", 22)}</div>
          <div class="li wide"><span class="pair">${ic(1060, 93, 15, 17, svg`<path d="M1066.500 93v8M1066.500 98q4-2.500 4 .5t-4 2" fill="none" stroke="#a33fb5" stroke-width="1.200"/><path d="M1074 104q-3.500-1-3.500 2t3.500 2M1063 98q-4 2-1 6l3 .5M1063.500 102l2.500 2.500-2.500 3" fill="none" stroke="#2b88d8" stroke-width="1.200"/>`)}${t("Replace", 42)}</span>${chev()}</div>
          <div class="li">${ic(1061, 116, 15, 17, svg`<path d="M1062.500 117.500v12l3-3 2.500 5 2-1-2.500-4.500h4z" fill="#fff" stroke=${k}/>`)}${t("Select", 31)}${chev()}</div>
        </div>`)}
      ${this.group("Voice", 27, big(ic(1170, 68, 20, 36, svg`<rect x="1174.500" y="71" width="11" height="22" rx="5.500" fill="#83beec" stroke="#2b78c0"/><path d="M1171.500 86v2q0 8 8.500 8t8.500-8v-2M1180 96v5" fill="none" stroke="#555" stroke-width="1.200"/>`), ["Dictate", 37], null, true, "full"))}
      ${this.group("Add-ins", 40, big(ic(1226, 68, 28, 36, svg`<path d="M1226.500 72.500h27v27h-27zM1229.500 75.500h9v9h-9zM1241.500 75.500h9v9h-9zM1229.500 87.500h9v9h-9zM1241.500 87.500h9v9h-9z" fill="none" stroke="#d83b01" stroke-width="1.200"/>`), ["Add-ins", 42], null, false, "full"))}
      ${this.group("", 0, big(ic(1289, 68, 31, 36, svg`<path d="M1291.500 77v19.500h27v-21h-17" fill="#fff" stroke=${k} stroke-width="1.200"/><path d="M1294 94h22v-15.500h-17M1298 83.500h18M1309.500 83.500v10.500" fill="none" stroke=${k}/><path d="M1296 70.500h8l-4 8h5l-14 12 4.500-10h-5z" fill="#fbd58a" stroke="#e8912d"/>`), ["Designer", 46], null, false, "full"))}
      <div class="collapse">${ic(0, 0, 10, 7, svg`<path d="M.5 5.500L5 1l4.500 4.500" fill="none" stroke="#444" stroke-width="1.300"/>`)}</div>
    </div>`;
  }

  workArea() {
    const up = ic(0, 0, 8, 4, svg`<path d="M4 0l4 4H0z" fill="#222"/>`), down = ic(0, 0, 8, 4, svg`<path d="M4 4l4-4H0z" fill="#222"/>`);
    return html`<main class="work">
      <div class="panel">${thumbs.map((b, i) => html`<div class="item ${i === 1 ? "sel" : ""}"><span class="num">${i + 1}</span>${slide(140, 79, b)}</div>`)}</div>
      <div class="bar"><div class="sq">${up}</div><div class="hold h1"></div><div class="track"></div><div class="sq">${down}</div></div>
      <div class="split"></div>
      <div class="stage">
        <div class="canvas"><svg class="ic" width="869" height="490" viewBox="349 170 869 490">${facets}
          <path d="M1216.500 170v219M350 658.500h867" stroke="#fff"/><path d="M349.500 659.500V170.500H1217.500V659.500z" fill="none" stroke="#c2c2c2"/>
          <path d="M1016 170.500h112" stroke="#989898"/>
          <path d="M380 299.500h610" stroke="#dedede" stroke-width="2"/><path d="M380 297.500h610" stroke="#b3b3b3" stroke-width="3"/>
          ${st(422, 274, 25, 167, "Note to reader", "sb")}
          ${st(387, 379, 19.6, 635, "Career Grow in an institute where the students are getting prepared for")}
          ${st(387, 403, 19.6, 631, "their future. We take some students' data which is used for our project.")}
          ${st(387, 453, 19.6, 610, "Across the project, we used the same data set for our three different")}
          ${st(387, 478, 19.6, 628, "formulas. Here we are presenting the same result but in three different")}
          ${st(387, 503, 19.6, 622, "ways. As we all know excel is the piler of all data industry. So here we")}
          ${st(387, 528, 19.6, 586, "are introducing that dynamic side of Excel throughout the project.")}
        </svg></div>
        <div class="notes">${t("Click to add notes", 117)}</div>
      </div>
      <div class="right"><div class="bar rbar"><div class="sq">${up}</div><div class="hold h2"></div><div class="track"></div><div class="sq">${down}</div></div>
        <div class="jump">${ic(0, 0, 9, 12, svg`<path d="M4.500 0L9 5H7.500L9 9v2H0V9l1.500-4H0z" fill="#666"/>`)}</div>
        <div class="jump">${ic(0, -3, 9, 12, svg`<path d="M4.500 11L9 6H7.500L9 2V0H0v2l1.500 4H0z" fill="#666"/>`)}</div></div>
    </main>`;
  }

  statusBar() {
    const k = "#444";
    return html`<footer class="status">
      ${t("Slide 2 of 10", 63)}${t("English (India)", 73)}
      ${ic(197, 709, 15, 16, svg`<circle cx="203" cy="712" r="1.800" fill="none" stroke=${k}/><path d="M198 712.500l3 2h4.500l3.500-2M201 714.500v4l-2 5.500M205.500 714.500v3M202 719l1 3M205 718l6 6M211 718l-6 6" fill="none" stroke=${k} stroke-width="1.300"/>`)}
      ${t("Accessibility: Investigate", 126, "b")}
      ${ic(941, 709, 16, 16, svg`<path d="M941 715.500h16M941 719.500h16M941 724.500h16M945.500 713l3.500-3.500 3.500 3.500" fill="none" stroke=${k}/>`)}${t("Notes", 30)}
      <div class="active">${ic(1021, 710, 14, 13, svg`<path d="M1021.500 711.500h13v11h-13zM1024.500 711.500v11M1024.500 719.500h10M1027.500 713.500h5v3h-5z" fill="none" stroke=${k}/>`)}</div>
      <i></i>
      ${ic(1061, 710, 14, 13, svg`<path d="M1061.500 711.500h5v4h-5zM1069.500 711.500h5v4h-5zM1061.500 718.500h5v4h-5zM1069.500 718.500h5v4h-5z" fill="none" stroke=${k}/>`)}
      ${ic(1101, 710, 14, 14, svg`<path d="M1107.500 712v11M1107.500 712q-3-1.500-6-.5v10.500h6M1107.500 712q3-1.500 6-.5v10.500h-6M1103 714.500h3M1103 716.500h3M1103 718.500h3M1109.500 714.500h3M1109.500 716.500h3M1109.500 718.500h3" fill="none" stroke=${k}/>`)}
      ${ic(1141, 710, 13, 14, svg`<path d="M1141 710.500h13M1142.500 710.500v7h10v-7M1147.500 717.500v5.500M1143.500 723h8M1145 714h5" fill="none" stroke=${k}/>`)}
      ${ic(1174, 713, 8, 8, svg`<path d="M1174 716.500h8" stroke=${k}/>`)}
      ${ic(1187, 710, 100, 14, svg`<path d="M1187 717.500h100M1237.500 715v6" stroke=${k}/><rect x="1218" y="712" width="4.500" height="11" fill=${k}/>`)}
      ${ic(1291, 712, 9, 9, svg`<path d="M1291 716.500h9M1295.500 712v9" stroke=${k}/>`)}
      ${t("68%", 21)}
      ${ic(1346, 709, 15, 16, svg`<path d="M1350.500 713.500h6v6h-6zM1351.500 711.500l2-2 2 2M1351.500 722l2 2 2-2M1348.500 714.500l-2 2 2 2M1358.500 714.500l2 2-2 2" fill="none" stroke=${k}/>`)}
    </footer>`;
  }

  taskBar() {
    const bowl = (cx: number, top: number, c1: string, c2: string, s: number) => svg`<path d="M${cx - 15 * s} ${top + 14 * s}q${3 * s} ${12 * s} ${15 * s} ${12 * s}t${15 * s} ${-12 * s}z" fill="#a9a9d0"/><ellipse cx=${cx} cy=${top + 14 * s} rx=${15 * s} ry=${4 * s} fill="#d4d2ea"/><path d="M${cx - 13 * s} ${top + 14 * s}Q${cx - 5 * s} ${top + 2} ${cx} ${top}q${5 * s} 2 ${13 * s} ${14 * s}q${-13 * s} ${5 * s} ${-26 * s} 0z" fill=${c1}/><path d="M${cx} ${top}q${5 * s} 2 ${13 * s} ${14 * s}q${-6 * s} 3 ${-10 * s} 2z" fill=${c2}/>`;
    return html`<div class="task">
      ${ic(16, 740, 16, 16, svg`<path d="M16 742.300l6.500-.9v6.200H16zM23.500 741.200l8.500-1.200v7.600h-8.500zM16 748.600h6.500v6.200l-6.500-.9zM23.500 748.600H32v7.400l-8.500-1.200z" fill="#000"/>`, "start")}
      <div class="box">${ic(60, 740, 16, 17, svg`<circle cx="70.500" cy="745.500" r="5" fill="none" stroke="#111" stroke-width="1.300"/><path d="M67 749.500l-6.500 6.500" stroke="#111" stroke-width="1.300"/>`)}${t("Type here to search", 128)}
        ${ic(256, 729, 80, 38, svg`<path d="M267 751h69v16h-80v-4z" fill="#b97a48"/><path d="M256 763h80v4h-80z" fill="#87492a"/>${bowl(275, 735, "#eec12e", "#d09a10", 0.75)}${bowl(318, 735, "#ee5c84", "#d93465", 0.9)}${bowl(295, 736, "#3cc28f", "#24a273", 1.05)}`, "bowls")}</div>
      ${ic(352, 740, 16, 17, svg`<path d="M353.500 744.500h9v8h-9zM352.500 740v2.500h11V740M352.500 757v-2.500h11v2.500M366.500 740v3.500M366.500 749v7" fill="none" stroke="#111" stroke-width="1.300"/><rect x="365" y="744.500" width="3" height="3" fill="#111"/>`, "view")}
      <div class="apps">
        ${app(ic(399, 736, 24, 24, svg`<circle cx="411" cy="748" r="12" fill="#1673c6"/><path d="M399.500 745q3-9 12-9 11 1 11.500 10 0 6-7 6-5 0-3-3 2-6-5-6-6 0-8.500 2z" fill="#38bfd2"/><path d="M413 736q10 2 10 10 0 6-7 6-5 0-3-3 3-7-3-12z" fill="#62cf63"/><path d="M399 747q5-6 11-3-4 3-2 8 3 6 12 4-4 5-11 4-10-2-10-13z" fill="#1565b0"/><path d="M412 745.500q-3 4 0 6 4 2.500 10 0l1.500.5-1.500 3q-5 2-9.500 0-4-3-3-7 .5-2 2.500-2.500z" fill="#e0d8dc"/>`), "")}
        ${app(ic(447, 737, 24, 22, svg`<path d="M447 739h9l2 3h12v15h-23z" fill="#e2a31a"/><path d="M447 742h24v15h-24z" fill="#fbd15b"/><path d="M452 757v-7.500h16v7.500h-4v-4h-7.500v4z" fill="#2f8fdb"/>`), "run ex")}
        ${app(ic(497, 737, 24, 23, svg`<path d="M497 744.500l12-8 12 8v7h-24z" fill="#0d5ba6"/><path d="M497 745v14h24v-14l-10 6z" fill="#35b5ea"/><path d="M497 745l24 14h-24z" fill="#1a8fdb"/><path d="M499 745l10 6.500 10-6.500z" fill="#fff"/>`), "")}
        ${app(chromeLogo(559, svg`<circle cx="18.500" cy="19.500" r="7.500" fill="#30292c"/><circle cx="15.500" cy="20" r="2.500" fill="#a0583c"/><circle cx="22" cy="18" r="2.200" fill="#d9b7a8"/><path d="M13 24q3-3 6 2-3 2-6-2z" fill="#5e7fbc"/>`))}
        ${app(officeLogo(595, "W", "#185abd", ["#41a5ee", "#2b7cd3", "#185abd", "#103f91"]))}
        ${app(chromeLogo(657, svg`<circle cx="18.500" cy="19.500" r="7.500" fill="#b36fe0"/><path d="M14.500 26q-1-11 4-11t4.500 11z" fill="#2b2433"/><circle cx="18.500" cy="18.500" r="3" fill="#fff"/><path d="M16.500 26v-3.500h4V26z" fill="#eee"/>`))}
        ${app(ic(693, 736, 24, 24, svg`<rect x="693" y="736" width="24" height="24" fill="#0078d7"/><rect x="706" y="740" width="6" height="16" rx="1" fill="#d39a10"/><rect x="702" y="744" width="6.500" height="12" rx="1" fill="#edbd2c"/><rect x="698" y="749" width="6" height="7" rx="1" fill="#fbe07a"/>`))}
        ${app(officeLogo(742, "X", "#107c41", ["#21a366", "#33c481", "#107c41", "#185c37"]))}
        ${app(ic(792, 737, 22, 22, svg`<rect x="792" y="737" width="22" height="21.500" rx="4" fill="#b30b00"/><path d="M797 754q5-3 6.500-12 1-2 .5 2 1 6 6 8 2 2-2 .5-5-1-10 .5-2 2-1 1z" fill="none" stroke="#fff" stroke-width="1.300"/>`))}
        ${app(ic(840, 736, 25, 24, svg`<circle cx="853.500" cy="747.500" r="10.800" fill="#ed6c47"/><path d="M853.500 736.700a10.800 10.800 0 0 1 10.800 10.800h-10.800z" fill="#ff9070"/><path d="M842.700 747.500a10.800 10.800 0 0 0 21.600 0z" fill="#d35230"/><rect x="840" y="741.500" width="13" height="13" rx="1" fill="#b83b1d"/><text x="846.500" y="751.700" class="logo">P</text>`), "run cur")}
      </div><i></i>
      ${ic(1006, 735, 24, 22, svg`<circle cx="1018" cy="746.500" r="10" fill="#f8a51b"/><path d="M1007 745h14M1009 750h16M1006 753h12" stroke="#ffe08a" stroke-width="1.500"/><path d="M1008 747.500h15M1007 751.500h16" stroke="#f58a1e" stroke-width="1"/><circle cx="1024" cy="742" r="6" fill="#c42b1c"/><text x="1024" y="745.500" class="logo">1</text>`)}
      ${t("27°C", 29, "wx")}
      ${ic(1093, 743, 12, 9, svg`<path d="M1093.500 750.500l5.500-5.500 5.500 5.500" fill="none" stroke="#111" stroke-width="1.300"/>`)}
      ${ic(1118, 740, 12, 17, svg`<path d="M1118.500 744.500h7.500v8h-7.500zM1126 747l3-2v7l-3-2M1119 742q4-2.500 8 0M1119 755q4 2.500 8 0" fill="none" stroke="#111" stroke-width="1.200"/>`)}
      ${ic(1140, 743, 16, 11, svg`<path d="M1140.500 744.500h12.500v8.500h-12.500zM1154.500 746.500v4" fill="none" stroke="#111" stroke-width="1.300"/><rect x="1142.500" y="746.500" width="7" height="4.500" fill="#111"/>`)}
      ${ic(1166, 742, 13, 13, svg`<path d="M1166.500 754q0-10 11.500-11M1169.500 754.500q0-7.500 8.500-8.500M1172.500 754.500q0-4.500 5.500-5.500" fill="none" stroke="#222" stroke-width="1.200"/><circle cx="1177" cy="753.500" r="1.500" fill="#111"/>`)}
      ${ic(1187, 741, 17, 14, svg`<path d="M1187.500 746h2.500l4-3.500v11l-4-3.500h-2.500zM1196 745q2 3 0 6M1198.500 743.500q3 4.500 0 9" fill="none" stroke="#111" stroke-width="1.200"/><path d="M1201 742q4 6 0 12" fill="none" stroke="#999"/>`)}
      ${t("ENG", 22)}
      <div class="clock">${t("13:04", 27)}${t("25-03-2024", 58)}</div>
      ${ic(1325, 728, 41, 40, svg`<path d="M1325 740.500h16v13h-10l-3 3v-3h-3z" fill="#111"/><path d="M1328 744h10M1328 747.500h10M1328 751h6" stroke="#ddd"/><circle cx="1341" cy="755" r="8" fill="#d3d3d5" stroke="#888"/><text x="1341" y="759" font-size="11" text-anchor="middle" fill="#111">2</text><path d="M1361.500 728v40" stroke="#b0b0b4"/>`)}
    </div>`;
  }

  render() {
    return html`<div class="w">${this.titleBar()}${this.tabRow()}${this.ribbon()}${this.workArea()}${this.statusBar()}${this.taskBar()}</div>`;
  }
}
